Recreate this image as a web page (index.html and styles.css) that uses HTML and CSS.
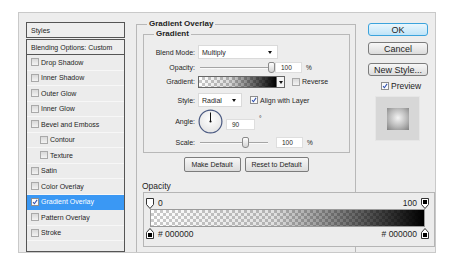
FILE: index.html
```html
<!DOCTYPE html>
<html lang="en">
<head>
  <meta charset="UTF-8" />
  <title>Layer Style</title>
  <link rel="stylesheet" href="styles.css">
</head>
<body>

  <div class="dialog">

    <div class="list">
      <div class="list-head">Styles</div>
      <div class="list-head">Blending Options: Custom</div>
      <ul class="items">
        <li><span class="cb"></span>Drop Shadow</li>
        <li><span class="cb"></span>Inner Shadow</li>
        <li><span class="cb"></span>Outer Glow</li>
        <li><span class="cb"></span>Inner Glow</li>
        <li><span class="cb"></span>Bevel and Emboss</li>
        <li class="sub"><span class="cb"></span>Contour</li>
        <li class="sub"><span class="cb"></span>Texture</li>
        <li><span class="cb"></span>Satin</li>
        <li><span class="cb"></span>Color Overlay</li>
        <li class="sel"><span class="cb on"><svg viewBox="0 0 8 8"><path d="M1.4 4.2 L3.2 6.3 L6.8 1.2" /></svg></span>Gradient Overlay</li>
        <li><span class="cb"></span>Pattern Overlay</li>
        <li><span class="cb"></span>Stroke</li>
      </ul>
    </div>

    <div class="main">
      <fieldset class="group">
        <legend>Gradient Overlay</legend>
        <fieldset class="group inner">
          <legend>Gradient</legend>

          <div class="row r-blend">
            <span class="lbl">Blend Mode:</span>
            <div class="select w-blend">Multiply<i class="arrow"></i></div>
          </div>

          <div class="row r-opacity">
            <span class="lbl">Opacity:</span>
            <div class="slider"><i class="track"></i><i class="thumb" style="left: 70px"></i></div>
            <div class="num">100</div>
            <span class="unit">%</span>
          </div>

          <div class="row r-gradient">
            <span class="lbl">Gradient:</span>
            <div class="swatch"></div>
            <div class="swatch-drop"><i class="arrow"></i></div>
            <span class="cb check-gap"></span>
            <span class="txt">Reverse</span>
          </div>

          <div class="row r-style">
            <span class="lbl">Style:</span>
            <div class="select w-style">Radial<i class="arrow"></i></div>
            <span class="cb check-gap on"><svg viewBox="0 0 8 8"><path d="M1.4 4.2 L3.2 6.3 L6.8 1.2" /></svg></span>
            <span class="txt">Align with Layer</span>
          </div>

          <div class="row r-angle">
            <span class="lbl">Angle:</span>
            <svg class="dial" viewBox="0 0 25 25">
              <defs>
                <radialGradient id="dialfill" cx="50%" cy="40%" r="60%">
                  <stop offset="0" stop-color="#ffffff" />
                  <stop offset="1" stop-color="#e4e4e4" />
                </radialGradient>
              </defs>
              <circle cx="12.5" cy="12.5" r="11.4" fill="url(#dialfill)" stroke="#4b5a82" stroke-width="1.2" />
              <line x1="12.5" y1="12.5" x2="12.5" y2="3.5" stroke="#111" stroke-width="1" />
              <circle cx="12.5" cy="12.5" r="1.1" fill="#111" />
            </svg>
            <div class="num w-angle">90</div>
            <span class="unit deg">°</span>
          </div>

          <div class="row r-scale">
            <span class="lbl">Scale:</span>
            <div class="slider short"><i class="track"></i><i class="thumb" style="left: 44px"></i></div>
            <div class="num">100</div>
            <span class="unit">%</span>
          </div>
        </fieldset>

        <div class="btn-row">
          <button class="btn small w-make">Make Default</button>
          <button class="btn small w-reset">Reset to Default</button>
        </div>
      </fieldset>
    </div>

    <div class="side">
      <button class="btn ok">OK</button>
      <button class="btn cancel">Cancel</button>
      <button class="btn newstyle">New Style...</button>
      <div class="preview-check">
        <span class="cb on"><svg viewBox="0 0 8 8"><path d="M1.4 4.2 L3.2 6.3 L6.8 1.2" /></svg></span>
        <span>Preview</span>
      </div>
      <div class="preview-box"><div class="preview-swatch"></div></div>
    </div>

    <div class="editor">
      <div class="editor-title">Opacity</div>
      <div class="editor-box">
        <div class="stops">
          <div class="stop-group">
            <svg class="marker" viewBox="0 0 8 11"><path d="M0.5 0.5 H7.5 V6.5 L4 10.5 L0.5 6.5 Z" fill="#fff" stroke="#333" /></svg>
            <span>0</span>
          </div>
          <div class="stop-group">
            <span>100</span>
            <svg class="marker" viewBox="0 0 8 11"><path d="M0.5 0.5 H7.5 V6.5 L4 10.5 L0.5 6.5 Z" fill="#fff" stroke="#333" /><rect x="2" y="2" width="4" height="4" fill="#000" /></svg>
          </div>
        </div>
        <div class="bar"></div>
        <div class="stops bottom">
          <div class="stop-group">
            <svg class="marker" viewBox="0 0 8 11"><path d="M0.5 10.5 H7.5 V4.5 L4 0.5 L0.5 4.5 Z" fill="#fff" stroke="#333" /><rect x="2" y="5" width="4" height="4" fill="#000" /></svg>
            <span># 000000</span>
          </div>
          <div class="stop-group">
            <span># 000000</span>
            <svg class="marker" viewBox="0 0 8 11"><path d="M0.5 10.5 H7.5 V4.5 L4 0.5 L0.5 4.5 Z" fill="#fff" stroke="#333" /><rect x="2" y="5" width="4" height="4" fill="#000" /></svg>
          </div>
        </div>
      </div>
    </div>

  </div>

</body>
</html>
```

FILE: styles.css
```css
body, html {
  margin: 0;
  padding: 0;
  background: #ffffff;
  font-family: 'Liberation Sans', Arial, sans-serif;
  color: #1e1e1e;
}

.dialog {
  margin: 12px 0 0 18px;
  width: 418px;
  height: 241px;
  box-sizing: border-box;
  border: 1px solid #c9c9c9;
  background: #ededed;
  padding: 9px 7px 0 7px;
  display: grid;
  grid-template-columns: 99px 230px 73px;
  grid-template-rows: 1fr auto;
}

/* style list */

.list {
  grid-column: 1;
  grid-row: 1 / 3;
  display: flex;
  flex-direction: column;
  font-size: 7px;
}

.list-head {
  height: 16px;
  box-sizing: border-box;
  border: 1px solid #555;
  background: #eeeeee;
  padding-left: 4px;
  display: flex;
  align-items: center;
  margin-bottom: 1px;
}

.items {
  list-style: none;
  margin: -1px 0 0 0;
  padding: 0;
  flex: 1;
  border: 1px solid #555;
  border-top: none;
  background: #ececec;
}

.items li {
  height: 15.5px;
  box-sizing: border-box;
  border-bottom: 1px solid #f7f7f7;
  padding-left: 4px;
  display: flex;
  align-items: center;
}

.items li.sub {
  padding-left: 13px;
}

.items li.sel {
  background: #3a98f4;
  color: #fff;
  border-bottom-color: #3a98f4;
}

.cb {
  width: 8px;
  height: 8px;
  box-sizing: border-box;
  border: 1px solid #a9a9a9;
  background: linear-gradient(#d9d9d9, #f3f3f3);
  margin-right: 2px;
  flex: none;
  display: flex;
}

.cb.on {
  background: #fbfbfb;
  border-color: #8e8e8e;
}

.cb svg {
  width: 100%;
  height: 100%;
}

.cb svg path {
  fill: none;
  stroke: #2d4fb0;
  stroke-width: 1.4;
}

/* main panel */

.main {
  grid-column: 2;
  grid-row: 1 / 3;
  padding-left: 11px;
  display: flex;
  flex-direction: column;
}

.group {
  margin: 0;
  padding: 0 5px 0 6px;
  border: 1px solid #b8b8b8;
  min-inline-size: 0;
}

.main > .group {
  flex: 1;
  margin-top: -3px;
  border-bottom: none;
  width: 220px;
  box-sizing: border-box;
}

.group legend {
  font-size: 8px;
  font-weight: bold;
  padding: 0 2px;
  margin-left: 4px;
  line-height: 10px;
}

.group.inner {
  padding: 5px 0 3px 0;
  width: 207px;
  box-sizing: border-box;
}

.group.inner legend {
  margin-left: 10px;
}

.row {
  display: flex;
  align-items: center;
  font-size: 7px;
}

.r-blend { height: 16px; }
.r-opacity { height: 15px; }
.r-gradient { height: 13px; }
.r-style { height: 14px; margin-top: 5px; }
.r-angle { height: 29px; }
.r-scale { height: 13px; }

.lbl {
  width: 51px;
  margin-right: 3px;
  text-align: right;
  flex: none;
}

.select {
  position: relative;
  height: 14px;
  box-sizing: border-box;
  background: #fff;
  border: 1px solid #dadada;
  padding-left: 3px;
  display: flex;
  align-items: center;
  font-size: 7px;
}

.w-blend { width: 80px; }
.w-style { width: 44px; }

.arrow {
  position: absolute;
  right: 5px;
  top: 50%;
  margin-top: -1px;
  border-left: 2.5px solid transparent;
  border-right: 2.5px solid transparent;
  border-top: 3px solid #111;
}

.slider {
  position: relative;
  width: 76px;
  height: 11px;
  flex: none;
}

.track {
  position: absolute;
  left: 2px;
  right: 6px;
  top: 5px;
  height: 1px;
  background: #a5a5a5;
  border-bottom: 1px solid #fafafa;
}

.thumb {
  position: absolute;
  top: 0;
  width: 5px;
  height: 9px;
  border: 1px solid #8a8a8a;
  border-radius: 2px 2px 3px 3px;
  background: linear-gradient(#fdfdfd, #d4d4d4);
}

.num {
  width: 27px;
  height: 11px;
  box-sizing: border-box;
  margin-left: 1px;
  background: #fff;
  border: 1px solid #dedede;
  padding-left: 5px;
  display: flex;
  align-items: center;
  font-size: 6.5px;
}

.r-scale .num {
  margin-left: 2px;
}

.unit {
  margin-left: 4px;
  font-size: 6.5px;
}

.w-angle {
  width: 29px;
  margin-left: 3px;
  margin-top: 5px;
}

.deg {
  align-self: flex-start;
  margin-top: 8px;
}

.dial {
  width: 25px;
  height: 25px;
  flex: none;
}

.swatch {
  width: 79px;
  height: 12px;
  box-sizing: border-box;
  border: 1px solid #666;
  background:
    linear-gradient(to right, rgba(0,0,0,0) 0%, rgba(0,0,0,0.15) 40%, rgba(0,0,0,1) 100%),
    repeating-conic-gradient(#c8c8c8 0 25%, #ffffff 0 50%) 0 0 / 6px 6px;
}

.swatch-drop {
  position: relative;
  width: 8px;
  height: 12px;
  box-sizing: border-box;
  border: 1px solid #666;
  border-left: none;
  background: #f4f4f4;
}

.swatch-drop .arrow {
  right: 1px;
}

.check-gap {
  margin-left: 7px;
  margin-right: 2px;
}

.r-style .check-gap {
  margin-left: 8px;
}

.txt {
  font-size: 7px;
}

.btn-row {
  display: flex;
  justify-content: center;
  gap: 4px;
  margin-top: 4px;
  padding-right: 1px;
}

.btn {
  font-family: 'Liberation Sans', Arial, sans-serif;
  color: #1e1e1e;
  padding: 0;
  border: 1px solid #7c7c7c;
  border-radius: 2px;
  background: linear-gradient(#f7f7f7, #dcdcdc);
  box-sizing: border-box;
  display: flex;
  align-items: center;
  justify-content: center;
}

.btn.small {
  height: 15px;
  font-size: 7px;
}

.w-make { width: 57px; }
.w-reset { width: 64px; }

/* right column */

.side {
  grid-column: 3;
  grid-row: 1;
  padding-left: 13px;
  display: flex;
  flex-direction: column;
}

.side .btn {
  width: 60px;
  height: 13px;
  font-size: 9px;
  border-radius: 3px;
}

.btn.ok {
  margin-top: 1px;
  border-color: #3ba3dc;
  background: linear-gradient(#eaf6fd, #bfe4f8);
}

.btn.cancel {
  margin-top: 6px;
}

.btn.newstyle {
  margin-top: 8px;
}

.preview-check {
  margin-top: 5px;
  height: 10px;
  padding-left: 13px;
  display: flex;
  align-items: center;
  font-size: 8.5px;
}

.preview-box {
  margin: 5px 0 0 7px;
  width: 45px;
  height: 45px;
  box-sizing: border-box;
  border: 1px solid #e6e6e6;
  background: #d7d7d7;
  display: flex;
  align-items: center;
  justify-content: center;
}

.preview-swatch {
  width: 22px;
  height: 22px;
  background: radial-gradient(circle at 50% 45%, #f4f4f4 0%, #b9b9b9 55%, #808080 100%);
}

/* gradient editor */

.editor {
  grid-column: 2 / 4;
  grid-row: 2;
  margin: 0 -7px 5px 18px;
  position: relative;
  z-index: 1;
}

.editor-title {
  height: 11px;
  font-size: 8.5px;
  line-height: 11px;
  margin-left: -1px;
}

.editor-box {
  height: 55px;
  box-sizing: border-box;
  border: 1px solid #b5b5b5;
  background: #ececec;
  padding: 4px 5px 0 2px;
  font-size: 8.5px;
}

.stops {
  height: 12px;
  display: flex;
  justify-content: space-between;
  align-items: center;
}

.stops.bottom {
  height: 13px;
}

.stop-group {
  display: flex;
  align-items: center;
  gap: 4px;
}

.marker {
  width: 8px;
  height: 11px;
  flex: none;
}

.bar {
  height: 18px;
  margin: 0 4px;
  box-sizing: border-box;
  border: 1px solid #9a9a9a;
  background:
    linear-gradient(to right, rgba(0,0,0,0) 0%, rgba(0,0,0,0.12) 45%, rgba(0,0,0,1) 100%),
    repeating-conic-gradient(#cacaca 0 25%, #ffffff 0 50%) 0 0 / 6px 6px;
}
```
